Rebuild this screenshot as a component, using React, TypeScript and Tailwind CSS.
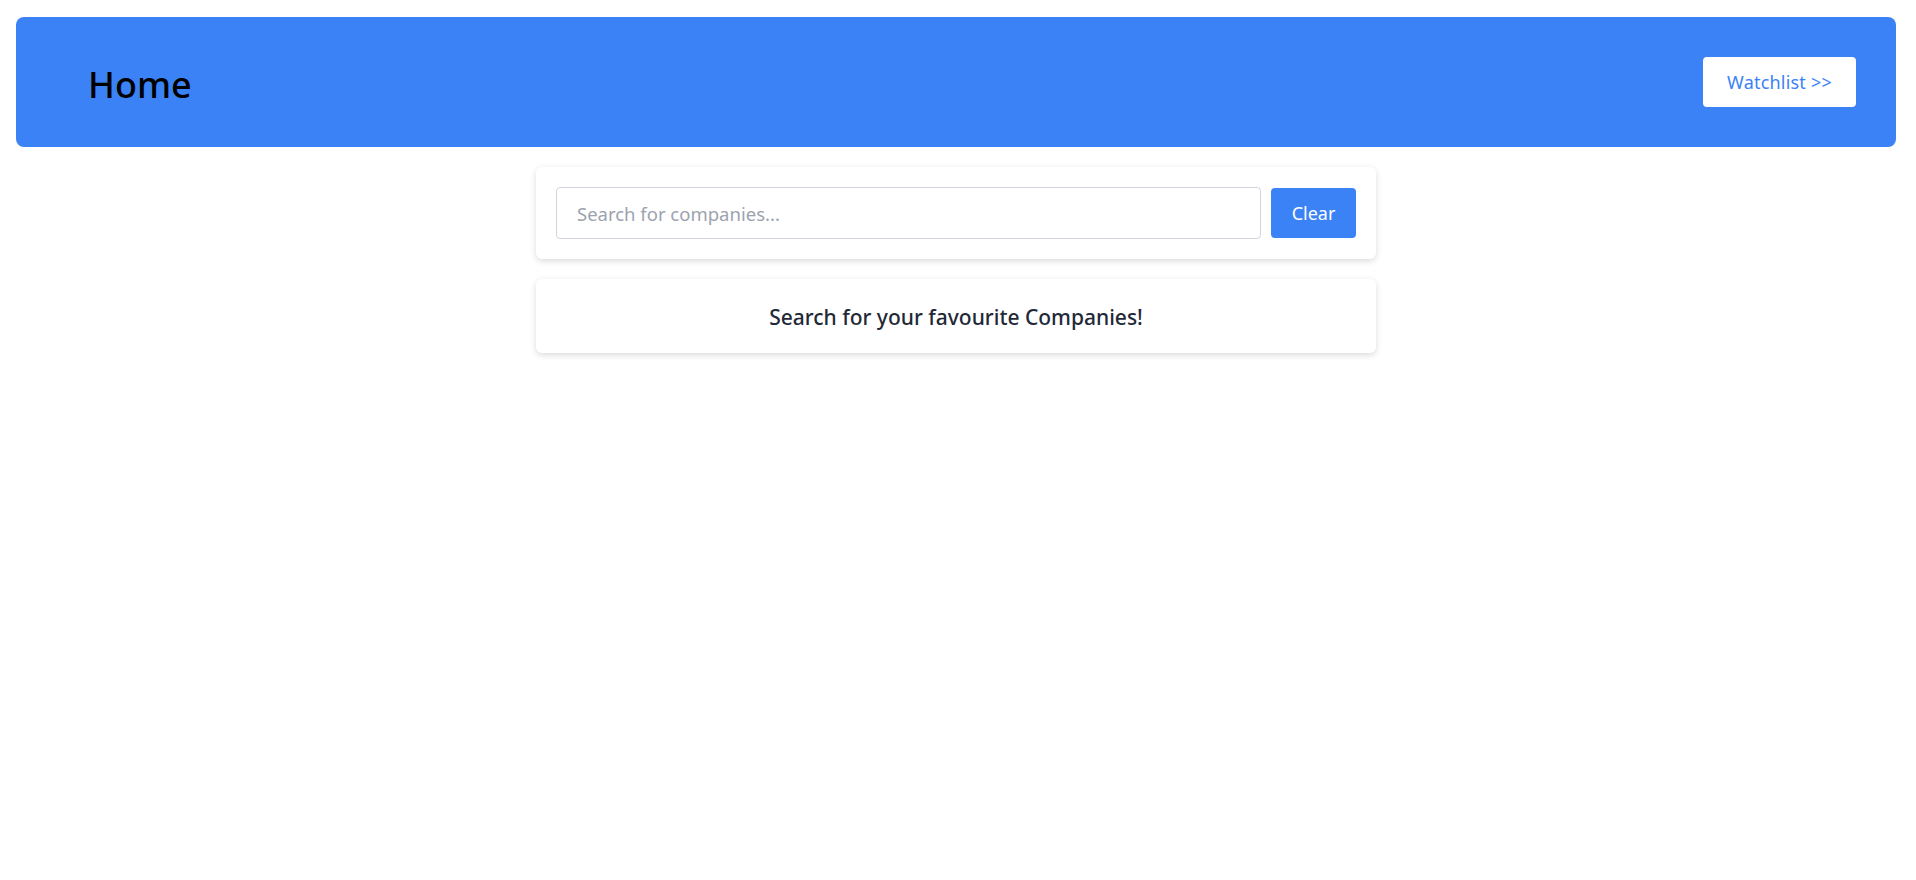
import { useState } from 'react';

function Header() {
  return (
    <header className="mt-[17px] mx-4 h-[130px] rounded-lg bg-[#3b82f6] flex items-center justify-between pl-[72px] pr-10">
      <h1 className="pt-[5px] text-[36px] leading-none font-medium text-black">Home</h1>
      <button className="w-[153px] h-[50px] bg-white rounded text-[18px] tracking-[0.2px] text-[#3b82f6]">Watchlist &gt;&gt;</button>
    </header>
  );
}

function App() {
  const [query, setQuery] = useState('');

  return (
    <div className="min-h-screen pr-1 bg-white font-['Noto_Sans','Open_Sans',sans-serif]">
      <Header />
      <main className="w-[840px] mx-auto mt-5 flex flex-col gap-5">
        <div className="flex items-center gap-[10px] p-5 bg-white rounded-md shadow-[0_2px_6px_rgba(0,0,0,0.15)]">
          <input
            value={query}
            onChange={(e) => setQuery(e.target.value)}
            placeholder="Search for companies..."
            className="flex-1 h-[52px] px-5 border border-[#d1d5db] rounded text-[18.5px] text-[#1f2937] placeholder:text-[#9ca3af] outline-none"
          />
          <button onClick={() => setQuery('')} className="w-[85px] h-[50px] bg-[#3b82f6] text-white rounded text-[18px]">
            Clear
          </button>
        </div>
        <div className="h-[74px] pt-[4px] flex items-center justify-center bg-white rounded-md shadow-[0_2px_6px_rgba(0,0,0,0.15)]">
          <p className="text-[21px] font-medium text-[#1f2937]">Search for your favourite Companies!</p>
        </div>
      </main>
    </div>
  );
}

export default App;
